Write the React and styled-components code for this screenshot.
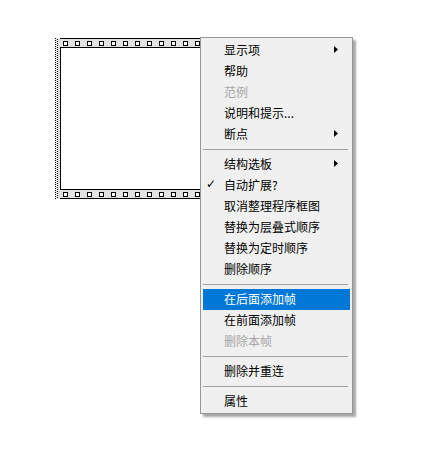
import React from "react";
import styled, { createGlobalStyle } from "styled-components";

const Global = createGlobalStyle`
  html, body { margin: 0; padding: 0; background: #ffffff; }
  body { font-family: "Noto Sans CJK SC", "Noto Sans", sans-serif; }
`;

const Canvas = styled.div`
  position: relative;
  width: 438px;
  height: 455px;
  padding: 38px 0 0 55px;
  box-sizing: border-box;
`;

/* flat sequence structure: film strip with a white diagram area */
const Sequence = styled.div`
  width: 160px;
  height: 161px;
  box-sizing: border-box;
  border: 1px solid #000;
  border-left: none;
  background: #e2e2e2;
  display: grid;
  grid-template-columns: 5px 1fr;
  grid-template-rows: 8px 1fr 8px;
`;

const Edge = styled.div`
  grid-row: 1 / 4;
  grid-column: 1;
  margin-top: -1px;
  margin-bottom: -1px;
  background-image:
    repeating-linear-gradient(to bottom, #000 0px, #000 1px, #fff 1px, #fff 2px),
    repeating-linear-gradient(to bottom, #fff 0px, #fff 1px, #000 1px, #000 2px);
  background-size: 1px 100%, 1px 100%;
  background-position: 0 0, 2px 0;
  background-repeat: no-repeat;
  background-color: #e2e2e2;
`;

const Strip = styled.div`
  grid-column: 2;
  display: flex;
  gap: 7px;
  padding-left: 3px;
  align-items: ${(p) => (p.$bottom ? "flex-end" : "flex-start")};
  padding-top: ${(p) => (p.$bottom ? "0" : "2px")};
  padding-bottom: ${(p) => (p.$bottom ? "1px" : "0")};
  overflow: hidden;
`;

const Hole = styled.div`
  flex: none;
  width: 5px;
  height: 5px;
  box-sizing: border-box;
  border: 1px solid #000;
  background: #ffffff;
`;

const Diagram = styled.div`
  grid-column: 2;
  border: 1px solid #000;
  border-right: none;
  background: #ffffff;
`;

const Menu = styled.div`
  position: absolute;
  left: 200px;
  top: 37px;
  width: 153px;
  box-sizing: border-box;
  background: #f0f0f0;
  border: 1px solid #979797;
  padding: 2px 2px 1px 2px;
  box-shadow: 3px 3px 2px rgba(0, 0, 0, 0.35);
  display: flex;
  flex-direction: column;
  font-size: 12px;
  color: #000;
`;

const Item = styled.div`
  position: relative;
  height: 21px;
  box-sizing: border-box;
  display: flex;
  align-items: center;
  padding-left: 21px;
  padding-bottom: 2px;
  white-space: nowrap;
  background: ${(p) => (p.$active ? "#0078d7" : "transparent")};
  color: ${(p) => (p.$active ? "#ffffff" : p.$disabled ? "#a6a6a6" : "#000000")};
`;

const Check = styled.span`
  position: absolute;
  left: 3px;
  top: 2px;
  font-size: 12px;
  font-family: "DejaVu Sans", sans-serif;
`;

const Arrow = styled.svg`
  position: absolute;
  right: 12px;
  top: 6px;
`;

const Separator = styled.div`
  height: 9px;
  display: flex;
  align-items: center;
  &::after {
    content: "";
    flex: 1;
    margin-right: 2px;
    border-top: 1px solid #a0a0a0;
  }
`;

const Sub = () => (
  <Arrow width="4" height="7" viewBox="0 0 4 7">
    <path d="M0 0 L4 3.5 L0 7 Z" fill="#000" />
  </Arrow>
);

const menu = [
  { t: "显示项", sub: true },
  { t: "帮助" },
  { t: "范例", disabled: true },
  { t: "说明和提示..." },
  { t: "断点", sub: true },
  "sep",
  { t: "结构选板", sub: true },
  { t: "自动扩展?", check: true },
  { t: "取消整理程序框图" },
  { t: "替换为层叠式顺序" },
  { t: "替换为定时顺序" },
  { t: "删除顺序" },
  "sep",
  { t: "在后面添加帧", active: true },
  { t: "在前面添加帧" },
  { t: "删除本帧", disabled: true },
  "sep",
  { t: "删除并重连" },
  "sep",
  { t: "属性" },
];

const holes = Array.from({ length: 13 });

export default function App() {
  return (
    <>
      <Global />
      <Canvas>
        <Sequence>
          <Edge />
          <Strip>
            {holes.map((_, i) => (
              <Hole key={i} />
            ))}
          </Strip>
          <Diagram />
          <Strip $bottom>
            {holes.map((_, i) => (
              <Hole key={i} />
            ))}
          </Strip>
        </Sequence>
        <Menu>
          {menu.map((m, i) =>
            m === "sep" ? (
              <Separator key={i} />
            ) : (
              <Item key={i} $active={m.active} $disabled={m.disabled}>
                {m.check && <Check>✓</Check>}
                {m.t}
                {m.sub && <Sub />}
              </Item>
            )
          )}
        </Menu>
      </Canvas>
    </>
  );
}
